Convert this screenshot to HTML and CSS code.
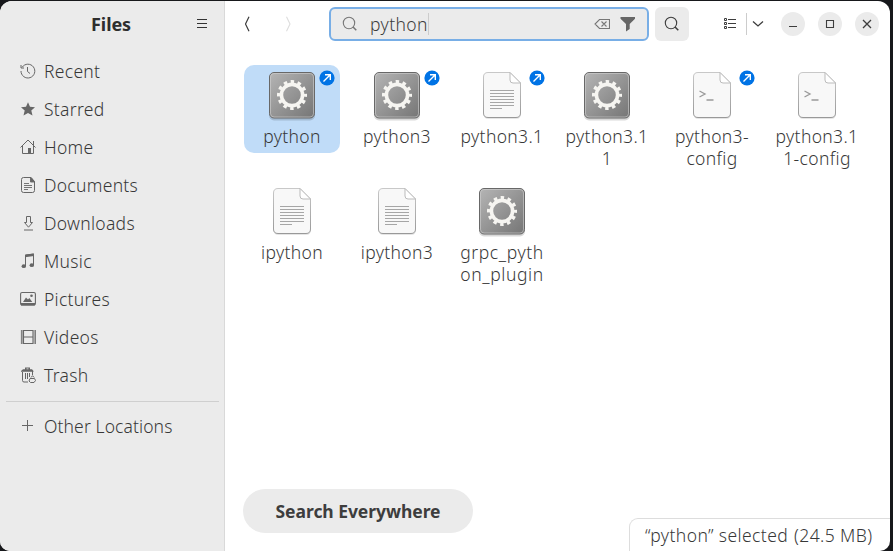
FILE: index.html
```
<!DOCTYPE html>
<html lang="en">
<head>
<meta charset="utf-8">
<title>Files</title>
<link rel="stylesheet" href="styles.css">
</head>
<body>
<svg class="defs" width="0" height="0" aria-hidden="true">
  <defs>
    <linearGradient id="metal" x1="0" y1="0" x2="1" y2="1"><stop offset="0" stop-color="#b5b5b5"/><stop offset="1" stop-color="#757575"/></linearGradient>
    <linearGradient id="edge" x1="0" y1="0" x2="0" y2="1"><stop offset="0" stop-color="#c8c8c8"/><stop offset="1" stop-color="#999"/></linearGradient>
    <symbol id="gear" viewBox="0 0 50 50">
      <rect x="2" y="3" width="46" height="46.500" rx="5" fill="#000" opacity=".15"/>
      <rect x="2.500" y="1.500" width="45" height="45.500" rx="4.500" fill="url(#metal)" stroke="#686868"/>
      <rect x="3.500" y="2.500" width="43" height="43.500" rx="3.500" fill="none" stroke="#d0d0d0" opacity=".6"/>
      <circle cx="25" cy="24" r="10.600" fill="none" stroke="#f6f5f1" stroke-width="3.600"/>
      <circle cx="25" cy="24" r="13.400" fill="none" stroke="#f6f5f1" stroke-width="3.200" stroke-dasharray="3.500 3.516" stroke-dashoffset="1.750"/>
    </symbol>
    <symbol id="sheet" viewBox="0 0 50 50">
      <path d="M11 2.500h22L44 13v30q0 5-5 5H11.500q-5 0-5-5V7q0-4.500 4.500-4.500z" fill="#000" opacity=".1"/>
      <path d="M11 1.500h22L43.500 12v30q0 4.500-4.500 4.500H11q-4.500 0-4.500-4.500V6q0-4.500 4.500-4.500z" fill="#f8f8f8" stroke="url(#edge)"/>
      <path d="M33 1.500V9q0 3 3 3h7.500z" fill="#fff" stroke="#bbb"/>
    </symbol>
    <symbol id="text" viewBox="0 0 50 50">
      <use href="#sheet"/>
      <path d="M13 19.500h24M13 22.500h24M13 25.500h24M13 28.500h24M13 31.500h24M13 34.500h24M13 37.500h12" stroke="#a6a6a6"/>
    </symbol>
    <symbol id="script" viewBox="0 0 50 50">
      <use href="#sheet"/>
      <path d="M12.500 20l5.500 3-5.500 3M19.500 29h7" fill="none" stroke="#999" stroke-width="1.300"/>
    </symbol>
    <symbol id="link" viewBox="0 0 16 16">
      <circle cx="8" cy="8" r="7.600" fill="#0073e5"/>
      <path d="M4.500 11.500l6.500-6.500M6 4.700h5.300V10" fill="none" stroke="#fff" stroke-width="1.400"/>
    </symbol>
    <symbol id="lens" viewBox="0 0 16 16"><circle cx="7" cy="7" r="5.700" fill="none" stroke="currentColor" stroke-width="1.100"/><path d="M11 11l3.300 3.300" stroke="currentColor" stroke-width="1.500"/></symbol>
  </defs>
</svg>
<div class="window">
  <aside class="sidebar">
    <header class="side-head"><h1>Files</h1>
      <svg class="menu" viewBox="0 0 12 10"><path d="M1 .5h10M1 4.500h10M1 8.500h10" stroke="#333"/></svg>
    </header>
    <nav>
      <a class="item recent"><svg viewBox="0 0 16 16"><path d="M2.200 4.200A6.900 6.900 0 1 1 1 8M1 2v3h3" fill="none" stroke="currentColor"/><path d="M7.500 4v4.500l2.500 2" fill="none" stroke="currentColor"/></svg><span>Recent</span></a>
      <a class="item starred"><svg viewBox="0 0 16 16"><path d="M8 1.200l2 4.500 5 .5-3.700 3.300 1.200 5L8 11.900l-4.500 2.600 1.200-5L1 6.200l5-.5z" fill="currentColor"/></svg><span>Starred</span></a>
      <a class="item home"><svg viewBox="0 0 16 16"><path d="M.5 8.500L8 1l7.500 7.500M2.500 7v7.500h11V7M13.500 2v4" fill="none" stroke="currentColor"/><path d="M8 9h3v5.500H8z" fill="currentColor"/></svg><span>Home</span></a>
      <a class="item documents"><svg viewBox="0 0 16 16"><path d="M3.500.5H11l3.500 4v9q0 2-2 2h-9q-2 0-2-2v-11q0-2 2-2z" fill="none" stroke="currentColor"/><path d="M10.500.5h.5l3.500 4.500h-4zM4 6.500h5M4 8.500h8M4 10.500h8M4 12.500h4" fill="currentColor" stroke="currentColor" stroke-width=".9"/></svg><span>Documents</span></a>
      <a class="item downloads"><svg viewBox="0 0 16 16"><path d="M6.500 1.500h4v6h2l-4 4.700-4-4.700h2zM4 15h9" fill="none" stroke="currentColor"/></svg><span>Downloads</span></a>
      <a class="item music"><svg viewBox="0 0 16 16"><path d="M5.500 13V2l8-1v11" fill="none" stroke="currentColor"/><path d="M5 1.800l9-1.200v2.500L5 4.300z" fill="currentColor"/><ellipse cx="3.800" cy="13.200" rx="2.200" ry="1.900" fill="currentColor"/><ellipse cx="11.800" cy="12.200" rx="2.200" ry="1.900" fill="currentColor"/></svg><span>Music</span></a>
      <a class="item pictures"><svg viewBox="0 0 16 16"><rect x=".6" y="1.500" width="14.800" height="12.500" rx="1.500" fill="none" stroke="currentColor" stroke-width="1.100"/><path d="M1 12h14v2.500H1zM3 11l3-4.500 2 2 1.300-1.500 3 4z" fill="currentColor"/><circle cx="11.500" cy="4.700" r="1.300" fill="currentColor"/></svg><span>Pictures</span></a>
      <a class="item videos"><svg viewBox="0 0 16 16"><path d="M3.500 1.500h9.500v13H3.500zM3.500 8H13" fill="none" stroke="currentColor" stroke-width="1.100"/><path d="M2.200 1.500v13M14.500 1.500v13" stroke="currentColor" stroke-width="1.600" stroke-dasharray="1 1"/><path d="M1.400 1v14M15.500 1v14" stroke="currentColor" stroke-width=".8"/></svg><span>Videos</span></a>
      <a class="item trash"><svg viewBox="0 0 16 16"><path d="M2.500 5v8.500q0 1.500 1.500 1.500h4M12.500 4v4M5.500 6v6M7.500 6v6M9.500 6v4" fill="none" stroke="currentColor"/><path d="M1 4.800V4l2-1.700h2V.5h5v1.800h2l1.500 1.700v.8zM6.500 2.300h2v-.7h-2z" fill="currentColor"/><path d="M10 11.500h4.500l1 2-1.500 2h-3.500l-1.500-1.500zM11 10.500l1.500-1.800 1.700 1.800" fill="none" stroke="currentColor"/></svg><span>Trash</span></a>
      <hr>
      <a class="item other"><svg viewBox="0 0 16 16"><path d="M2 7.500h11M7.500 2v11" stroke="currentColor"/></svg><span>Other Locations</span></a>
    </nav>
  </aside>
  <main>
    <header class="toolbar">
      <svg class="back" viewBox="0 0 8 16"><path d="M6 .8L2.500 8 6 15.200" fill="none" stroke="currentColor" stroke-width="1.200"/></svg>
      <svg class="forward" viewBox="0 0 8 16"><path d="M1.500.8L5 8l-3.500 7.200" fill="none" stroke="currentColor" stroke-width="1.100"/></svg>
      <div class="search"><svg class="lens"><use href="#lens"/></svg><span class="query">python</span><i class="caret"></i>
        <svg class="clear" viewBox="0 0 16 12"><path d="M5.500 1.500h10v9h-10L1 6zM7.500 3.500l5 5M12.500 3.500l-5 5" fill="none" stroke="currentColor" stroke-width="1.100"/></svg>
        <svg class="filter" viewBox="0 0 16 16"><path d="M.5 1h14.500v1.700L9.700 8v5l-3.700 2.500V8L.5 2.700z" fill="currentColor"/></svg>
      </div>
      <div class="find"><svg class="lens"><use href="#lens"/></svg></div>
      <svg class="list" viewBox="0 0 13 12"><path d="M.5 .5h2v2h-2zM.5 4.500h2v2h-2zM.5 8.500h2v2h-2z" fill="none" stroke="currentColor"/><path d="M4 1.500h8M4 5.500h8M4 9.500h8" stroke="currentColor"/></svg>
      <i class="split"></i>
      <svg class="chevron" viewBox="0 0 12 8"><path d="M1 1.500l5 4.500 5-4.500" fill="none" stroke="currentColor" stroke-width="1.300"/></svg>
      <div class="controls">
        <b><svg viewBox="0 0 24 24"><path d="M8 14.500h8" stroke="currentColor" stroke-width="1.100"/></svg></b>
        <b><svg viewBox="0 0 24 24"><path d="M8.500 8.500h7v7h-7z" fill="none" stroke="currentColor" stroke-width="1.100"/></svg></b>
        <b><svg viewBox="0 0 24 24"><path d="M8 8l8 8M16 8l-8 8" stroke="currentColor" stroke-width="1.300"/></svg></b>
      </div>
    </header>
    <section class="files">
      <div class="file selected"><svg class="icon"><use href="#gear"/></svg><svg class="badge"><use href="#link"/></svg><span>python</span></div>
      <div class="file"><svg class="icon"><use href="#gear"/></svg><svg class="badge"><use href="#link"/></svg><span>python3</span></div>
      <div class="file"><svg class="icon"><use href="#text"/></svg><svg class="badge"><use href="#link"/></svg><span>python3.1</span></div>
      <div class="file"><svg class="icon"><use href="#gear"/></svg><span>python3.1<br>1</span></div>
      <div class="file"><svg class="icon"><use href="#script"/></svg><svg class="badge"><use href="#link"/></svg><span>python3-<br>config</span></div>
      <div class="file"><svg class="icon"><use href="#script"/></svg><span>python3.1<br>1-config</span></div>
      <div class="file"><svg class="icon"><use href="#text"/></svg><span>ipython</span></div>
      <div class="file"><svg class="icon"><use href="#text"/></svg><span>ipython3</span></div>
      <div class="file wide"><svg class="icon"><use href="#gear"/></svg><span>grpc_pyth<br>on_plugin</span></div>
    </section>
    <footer><button class="everywhere"><span>Search Everywhere</span></button><div class="status">“python” selected <span>(24.5 MB)</span></div></footer>
  </main>
</div>
</body>
</html>
```
FILE: styles.css
```
* { box-sizing: border-box; }
body { margin: 0; height: 551px; padding: 1px 3px 0 0; background: #17181b; overflow: hidden; font: 360 17.5px/22px "Noto Sans", sans-serif; color: #383838; }
svg { display: block; flex: none; }
.defs { position: absolute; }
.window { display: flex; height: 550px; background: #fff; border-radius: 12px 12px 10px 10px; overflow: hidden; }
.sidebar { width: 225px; background: #ebebeb; border-right: 1px solid #d9d9d9; }
.side-head { height: 51px; padding-bottom: 5px; display: flex; align-items: center; justify-content: flex-end; padding-right: 16px; }
h1 { margin: 0 65px 0 0; font-size: 18px; line-height: 24px; color: #2e2e2e; letter-spacing: -.1px; }
.menu { width: 12px; height: 10px; }
.item { display: flex; align-items: center; height: 38px; padding-left: 20px; gap: 8px; }
.item svg { width: 16px; height: 16px; color: #666; }
.item span { letter-spacing: .3px; }
.item.other span { letter-spacing: .1px; }
hr { margin: 7px 5px 5px 6px; border: 0; border-top: 1px solid #cfcfcf; }
main { flex: 1; display: flex; flex-direction: column; min-width: 0; }
.toolbar { height: 46px; display: flex; align-items: center; padding-left: 18px; color: #3d3d3d; }
.back, .forward { width: 8px; height: 16px; }
.forward { margin-left: 34px; color: #ddd; }
.search { width: 320px; height: 34px; margin-left: 36px; display: flex; align-items: center; border: 2px solid #78aee6; border-radius: 6px; background: #ebebeb; padding: 0 11px; }
.lens { width: 16px; height: 16px; }
.search .lens { color: #777; }
.query { margin-left: 12px; letter-spacing: .4px; }
.caret { width: 1px; height: 22px; background: #ccc; }
.clear { width: 16px; height: 12px; margin-left: auto; color: #777; }
.filter { width: 16px; height: 16px; margin-left: 10px; color: #666; }
.find { width: 34px; height: 34px; margin-left: 6px; border-radius: 6px; background: #ebebeb; display: flex; align-items: center; justify-content: center; }
.list { width: 13px; height: 12px; margin-left: 35px; }
.split { width: 1px; height: 22px; margin-left: 9px; background: #ccc; }
.chevron { width: 12px; height: 8px; margin-left: 5px; }
.controls { display: flex; gap: 13px; margin-left: 17px; }
.controls b { width: 24px; height: 24px; border-radius: 50%; background: #ebebeb; }
.files { display: grid; grid-template-columns: repeat(6, 96px); grid-auto-rows: 110px; gap: 6px 9px; padding: 18px 0 0 19px; }
.file { position: relative; align-self: start; height: 88px; display: flex; flex-direction: column; align-items: center; padding-top: 6px; border-radius: 10px; text-align: center; }
.selected { background: #c0dcf8; }
.icon { width: 50px; height: 50px; }
.badge { position: absolute; right: 5px; top: 5px; width: 16px; height: 16px; }
.file span { margin-top: 4px; white-space: nowrap; letter-spacing: .35px; }
.file.wide span { letter-spacing: .6px; }
footer { margin-top: auto; display: flex; justify-content: space-between; align-items: flex-end; }
.everywhere { width: 230px; height: 44px; margin: 0 0 18px 18px; padding: 0; border: 0; border-radius: 22px; background: #ebebeb; color: #3d3d3d; font: bold 17.5px/22px "Noto Sans", sans-serif; letter-spacing: -.05px; }
.status { width: 261px; height: 33px; padding: 5px 0 0 15px; border: 1px solid #ddd; border-width: 1px 0 0 1px; border-radius: 9px 0 0; white-space: nowrap; letter-spacing: .4px; }
.status span { margin-left: 1px; }
```
